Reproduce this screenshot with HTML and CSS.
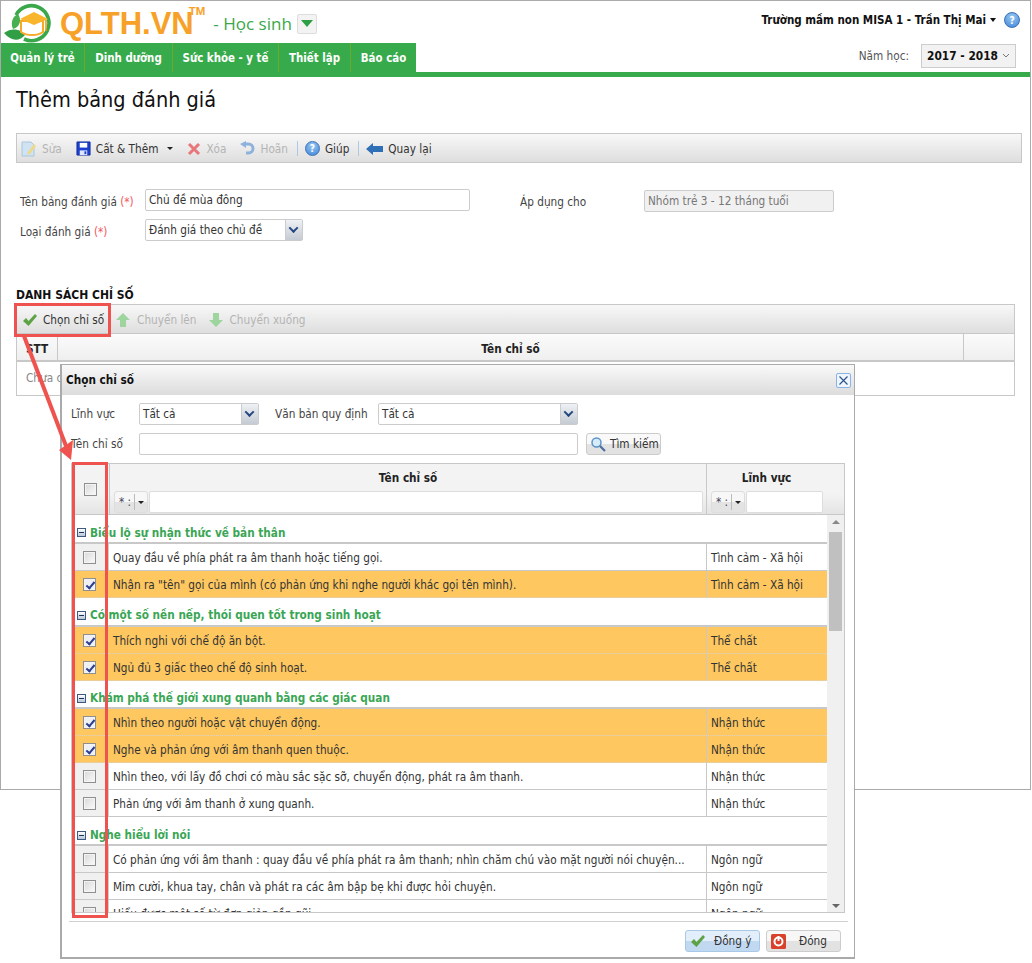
FILE: index.html
```html
<!DOCTYPE html>
<html lang="vi">
<head>
<meta charset="utf-8">
<title>Thêm bảng đánh giá</title>
<link rel="stylesheet" href="styles.css">
</head>
<body>
<div class="canvas">
  <div class="page">
    <header class="top">
      <div class="brand">
        <svg class="logo" viewBox="0 0 52 42" width="52" height="42">
          <path d="M13 13A17.500 17.500 0 1 1 21 37" fill="none" stroke="#3aa84a" stroke-width="3.600"/>
          <path d="M1 31C9 25 18 27 22 33C16 40 8 39 1 31Z" fill="#2f9e44"/>
          <path d="M10 27C7 20 10 14 15 12C19 18 17 25 10 27Z" fill="#47b04f"/>
          <path d="M18 19H40V30C34 34 24 34 18 30Z" fill="#fff" stroke="#f7a928" stroke-width="2"/>
          <path d="M31 10L45 17L31 23L17 17Z" fill="#f9b52c"/>
          <path d="M43 18V29" stroke="#e89a1e" stroke-width="1.600"/>
        </svg>
        <span class="brand-name">QLTH.VN</span><span class="brand-tm">TM</span>
        <span class="brand-role">- Học sinh</span>
        <span class="role-btn"><i class="role-caret"></i></span>
      </div>
      <div class="user">
        <span class="user-name">Trường mầm non MISA 1 - Trần Thị Mai</span>
        <i class="user-caret"></i>
        <span class="help-dot big">?</span>
      </div>
    </header>
    <div class="navbar">
      <nav class="tabs">
        <a class="tab t1">Quản lý trẻ</a>
        <a class="tab t2">Dinh dưỡng</a>
        <a class="tab t3">Sức khỏe - y tế</a>
        <a class="tab t4">Thiết lập</a>
        <a class="tab t5">Báo cáo</a>
      </nav>
      <div class="year">
        <span class="year-label">Năm học:</span>
        <span class="year-btn">2017 - 2018
          <svg width="8" height="5" viewBox="0 0 8 5"><path d="M1 1L4 4L7 1" fill="none" stroke="#777"/></svg>
        </span>
      </div>
    </div>
    <main class="content">
      <h1 class="title">Thêm bảng đánh giá</h1>
      <div class="toolbar main-tb">
        <span class="tb off"><svg width="16" height="18" viewBox="0 0 16 18"><path d="M1 2H10L13 5V16H1Z" fill="#cfe3f3" stroke="#a9c6de"/><path d="M7 12L13 4L15 6L9 14L6 15Z" fill="#ecd98a"/></svg>Sửa</span>
        <span class="tb"><svg width="15" height="15" viewBox="0 0 16 16"><path d="M1 1H15V15H1Z" fill="#1c3fcf" stroke="#14309f"/><rect x="4" y="2" width="8" height="5" fill="#fff"/><rect x="4" y="10" width="8" height="5" fill="#dfe6ff"/><rect x="9" y="11" width="2" height="3" fill="#1c3fcf"/></svg>Cất &amp; Thêm<i class="mini-caret"></i></span>
        <span class="tb off"><svg width="14" height="14" viewBox="0 0 14 14"><path d="M2 2L12 12M12 2L2 12" stroke="#e8777b" stroke-width="3"/></svg>Xóa</span>
        <span class="tb off"><svg width="15" height="16" viewBox="0 0 15 16"><path d="M5 3H8.500A4.500 4.500 0 0 1 8.500 12H6" fill="none" stroke="#8fb2dc" stroke-width="3"/><path d="M0 3L6 0V7Z" fill="#8fb2dc"/></svg>Hoãn</span>
        <i class="tb-sep"></i>
        <span class="tb"><span class="help-dot">?</span>Giúp</span>
        <i class="tb-sep"></i>
        <span class="tb"><svg width="17" height="14" viewBox="0 0 17 14"><path d="M0 7L7 1V4H17V10H7V13Z" fill="#2e6fb5"/></svg>Quay lại</span>
      </div>
      <form class="form">
        <div class="form-col left-col">
          <div class="form-row">
            <label class="lbl">Tên bảng đánh giá <b class="req">(*)</b></label>
            <span class="input name-input">Chủ đề mùa đông</span>
          </div>
          <div class="form-row">
            <label class="lbl">Loại đánh giá <b class="req">(*)</b></label>
            <span class="input select type-sel">Đánh giá theo chủ đề<i class="sel-arrow"></i></span>
          </div>
        </div>
        <div class="apply">
          <label class="apply-lbl">Áp dụng cho</label>
          <span class="input disabled">Nhóm trẻ 3 - 12 tháng tuổi</span>
        </div>
      </form>
      <h2 class="list-title">DANH SÁCH CHỈ SỐ</h2>
      <div class="toolbar list-tb">
        <span class="tb"><svg class="ico-check" width="16" height="14" viewBox="0 0 16 14"><path d="M1 8L4 5L6.500 8L13 1L15 3L6.500 13Z" fill="#5da345"/></svg>Chọn chỉ số</span>
        <span class="tb off wide-gap"><svg width="16" height="16" viewBox="0 0 16 16"><path d="M8 1L15 8H11V15H5V8H1Z" fill="#9ed49d"/></svg>Chuyển lên</span>
        <span class="tb off wide-gap"><svg width="16" height="16" viewBox="0 0 16 16"><path d="M8 15L15 8H11V1H5V8H1Z" fill="#9ed49d"/></svg>Chuyển xuống</span>
      </div>
      <div class="list-table">
        <div class="list-head">
          <span class="lh-stt">STT</span>
          <span class="lh-name">Tên chỉ số</span>
          <span class="lh-end"></span>
        </div>
        <div class="list-empty">Chưa có dữ liệu</div>
      </div>
    </main>
  </div>

  <section class="dialog">
    <div class="dlg-title">
      <span>Chọn chỉ số</span>
      <span class="dlg-close"><svg width="9" height="9" viewBox="0 0 9 9"><path d="M0.500 0.500L8.500 8.500M8.500 0.500L0.500 8.500" stroke="#2a4f8f" stroke-width="1.100"/></svg></span>
    </div>
    <div class="filters">
      <div class="f-row">
        <label class="f-lbl">Lĩnh vực</label>
        <span class="input select f-sel1">Tất cả<i class="sel-arrow"></i></span>
        <label class="f-lbl2">Văn bản quy định</label>
        <span class="input select f-sel2">Tất cả<i class="sel-arrow"></i></span>
      </div>
      <div class="f-row">
        <label class="f-lbl">Tên chỉ số</label>
        <span class="input f-text"></span>
        <span class="search-btn"><svg width="16" height="16" viewBox="0 0 16 16"><circle cx="6.500" cy="6.500" r="4.500" fill="#d7ecfb" stroke="#5c93c7" stroke-width="1.500"/><path d="M10 10L15 15" stroke="#4a6f9c" stroke-width="2.200"/></svg>Tìm kiếm</span>
      </div>
    </div>
    <div class="grid">
      <div class="g-head">
        <div class="gh-check"><i class="cb"></i></div>
        <div class="gh-col gh-name">
          <span class="gh-text">Tên chỉ số</span>
          <div class="gh-filter"><span class="op">* :<i class="op-sep"></i><i class="mini-caret"></i></span><span class="gh-input"></span></div>
        </div>
        <div class="gh-col gh-field">
          <span class="gh-text">Lĩnh vực</span>
          <div class="gh-filter"><span class="op">* :<i class="op-sep"></i><i class="mini-caret"></i></span><span class="gh-input"></span></div>
        </div>
        <div class="gh-end"></div>
      </div>
      <div class="g-body">
        <div class="g-rows">
          <div class="group g1"><i class="minus"></i>Biểu lộ sự nhận thức về bản thân</div>
          <div class="row"><span class="c-check"><i class="cb"></i></span><span class="c-name">Quay đầu về phía phát ra âm thanh hoặc tiếng gọi.</span><span class="c-field">Tình cảm - Xã hội</span></div>
          <div class="row sel"><span class="c-check"><i class="cb on"></i></span><span class="c-name">Nhận ra "tên" gọi của mình (có phản ứng khi nghe người khác gọi tên mình).</span><span class="c-field">Tình cảm - Xã hội</span></div>
          <div class="group g2"><i class="minus"></i>Có một số nền nếp, thói quen tốt trong sinh hoạt</div>
          <div class="row sel"><span class="c-check"><i class="cb on"></i></span><span class="c-name">Thích nghi với chế độ ăn bột.</span><span class="c-field">Thể chất</span></div>
          <div class="row sel"><span class="c-check"><i class="cb on"></i></span><span class="c-name">Ngủ đủ 3 giấc theo chế độ sinh hoạt.</span><span class="c-field">Thể chất</span></div>
          <div class="group g3"><i class="minus"></i>Khám phá thế giới xung quanh bằng các giác quan</div>
          <div class="row sel"><span class="c-check"><i class="cb on"></i></span><span class="c-name">Nhìn theo người hoặc vật chuyển động.</span><span class="c-field">Nhận thức</span></div>
          <div class="row sel"><span class="c-check"><i class="cb on"></i></span><span class="c-name">Nghe và phản ứng với âm thanh quen thuộc.</span><span class="c-field">Nhận thức</span></div>
          <div class="row"><span class="c-check"><i class="cb"></i></span><span class="c-name">Nhìn theo, với lấy đồ chơi có màu sắc sặc sỡ, chuyển động, phát ra âm thanh.</span><span class="c-field">Nhận thức</span></div>
          <div class="row"><span class="c-check"><i class="cb"></i></span><span class="c-name">Phản ứng với âm thanh ở xung quanh.</span><span class="c-field">Nhận thức</span></div>
          <div class="group g4"><i class="minus"></i>Nghe hiểu lời nói</div>
          <div class="row"><span class="c-check"><i class="cb"></i></span><span class="c-name">Có phản ứng với âm thanh : quay đầu về phía phát ra âm thanh; nhìn chăm chú vào mặt người nói chuyện...</span><span class="c-field">Ngôn ngữ</span></div>
          <div class="row"><span class="c-check"><i class="cb"></i></span><span class="c-name">Mỉm cười, khua tay, chân và phát ra các âm bập bẹ khi được hỏi chuyện.</span><span class="c-field">Ngôn ngữ</span></div>
          <div class="row"><span class="c-check"><i class="cb"></i></span><span class="c-name">Hiểu được một số từ đơn giản gần gũi.</span><span class="c-field">Ngôn ngữ</span></div>
        </div>
        <div class="scroll">
          <i class="s-up"></i>
          <i class="s-thumb"></i>
          <i class="s-down"></i>
        </div>
      </div>
    </div>
    <div class="dlg-foot">
      <span class="btn ok"><svg width="16" height="14" viewBox="0 0 16 14"><path d="M1 8L4 5L6.500 8L13 1L15 3L6.500 13Z" fill="#5da345"/></svg>Đồng ý</span>
      <span class="btn close"><svg width="15" height="15" viewBox="0 0 15 15"><rect width="15" height="15" rx="1.500" fill="#d8412a"/><circle cx="7.500" cy="7.500" r="4" fill="none" stroke="#fff" stroke-width="2"/><rect x="6.500" y="2" width="2" height="5" fill="#fff"/></svg>Đóng</span>
    </div>
  </section>

  <i class="mark mark-btn"></i>
  <i class="mark mark-col"></i>
  <svg class="arrow" width="60" height="130" viewBox="0 0 60 130">
    <path d="M6 2L48 112" stroke="#ef5350" stroke-width="4" fill="none"/>
    <path d="M53 126L41 116L55 106Z" fill="#ef5350"/>
  </svg>
</div>
</body>
</html>
```
FILE: styles.css
```css
* { box-sizing: border-box; }
html, body { margin: 0; padding: 0; background: #fff; }
body { font-family: "DejaVu Sans Condensed", "DejaVu Sans", sans-serif; font-stretch: condensed; font-size: 11.700px; color: #222; }
i { display: block; font-style: normal; }
.canvas { position: relative; width: 1032px; height: 963px; overflow: hidden; }
.page { width: 1031px; height: 790px; border: 1px solid #aaa; }

/* header */
.top { height: 42px; display: flex; justify-content: space-between; }
.brand { display: flex; align-items: center; position: relative; padding-left: 2px; }
.logo { flex: none; margin-top: 1px; }
.brand-name { font-family: "Liberation Sans", sans-serif; font-stretch: normal; font-weight: 700; font-size: 31px; color: #f7a128; margin-left: 5px; margin-top: 4px; }
.brand-tm { font-family: "Liberation Sans", sans-serif; font-stretch: normal; font-weight: 700; font-size: 11.500px; color: #f7a128; align-self: flex-start; margin: 4px 0 0 -5px; }
.brand-role { font-family: "Open Sans", sans-serif; font-stretch: normal; font-size: 17px; color: #3aa84a; margin-left: 8px; margin-top: 3px; }
.role-btn { width: 20px; height: 20px; margin-left: 5px; margin-top: 3px; background: #f3f3f3; border: 1px solid #ddd; border-radius: 2px; display: flex; align-items: center; justify-content: center; }
.role-caret { border: 6px solid transparent; border-top: 7px solid #2f9e44; border-bottom: 0; }
.user { display: flex; align-items: center; height: 38px; padding-right: 10px; }
.user-name { font-weight: 700; color: #111; font-size: 11.500px; }
.user-caret { margin: 0 8px 0 4px; border: 3.500px solid transparent; border-top: 4px solid #111; border-bottom: 0; }
.help-dot { display: inline-flex; align-items: center; justify-content: center; flex: none; width: 15px; height: 15px; border-radius: 50%; background: radial-gradient(circle at 50% 30%, #9cc9f3, #3d83d8); border: 1px solid #3b72b8; color: #fff; font-weight: 700; font-size: 10px; }
.help-dot.big { width: 16px; height: 16px; }
.navbar { height: 34px; display: flex; justify-content: space-between; border-bottom: 5px solid #37ab4c; }
.tabs { display: flex; }
.tab { height: 29px; background: #37ab4c; color: #fff; font-weight: 700; font-size: 11.400px; display: flex; align-items: center; justify-content: center; border-right: 1px solid #6aab2e; }
.t1 { width: 84px; } .t2 { width: 88px; } .t3 { width: 106px; } .t4 { width: 72px; } .t5 { width: 65px; border-right: 0; }
.year { display: flex; align-items: center; padding-right: 14px; height: 25px; }
.year-label { color: #555; margin-right: 12px; }
.year-btn { width: 95px; height: 24px; display: flex; align-items: center; justify-content: center; gap: 4px; border: 1px solid #ccc; background: #f2f2f2; font-weight: 700; color: #111; font-size: 11.800px; white-space: nowrap; }

/* content */
.content { padding: 0 8px 0 15px; }
.title { margin: 0; height: 56px; padding-top: 8px; font-size: 21.500px; font-weight: 400; color: #111; line-height: 29px; }
.toolbar { display: flex; align-items: center; border: 1px solid #c8c8c8; background: linear-gradient(#f8f8f8, #dedede); }
.main-tb { height: 30px; width: 1006px; padding: 1px 0 0 4px; }
.tb { display: flex; align-items: center; gap: 5px; color: #333; margin-right: 14px; white-space: nowrap; }
.tb.off { color: #b4b4b4; }
.mini-caret { border: 3px solid transparent; border-top: 3.500px solid #222; border-bottom: 0; margin-left: 4px; }
.tb-sep { width: 1px; height: 15px; background: #a9c9e6; margin: 0 7px 0 -5px; }
.form { display: flex; height: 132px; position: relative; }
.form-col { padding: 22px 0 0 4px; }
.form-row { display: flex; align-items: center; height: 30px; }
.lbl { width: 125px; color: #444; padding-top: 3px; }
.req { color: #f2555e; font-weight: 400; }
.input { display: flex; align-items: center; height: 22px; border: 1px solid #ccc; border-radius: 2px; padding-left: 3px; background: #fff; color: #333; position: relative; white-space: nowrap; }
.name-input { width: 325px; }
.select { padding-right: 18px; }
.type-sel { width: 158px; }
.sel-arrow { position: absolute; right: 0; top: 0; bottom: 0; width: 17px; background: linear-gradient(#eef1f5, #c5cbd3); border-left: 1px solid #ccc; }
.sel-arrow::after { content: ""; position: absolute; left: 4px; top: 6px; width: 5px; height: 5px; border-right: 2px solid #23477f; border-bottom: 2px solid #23477f; transform: rotate(45deg) translate(-1px, -1px); }
.apply { display: flex; align-items: center; height: 22px; margin: 27px 0 0 50px; }
.apply-lbl { width: 124px; color: #444; padding-top: 2px; }
.disabled { width: 190px; background: #f1f1f1; color: #777; }
.list-title { margin: 0; height: 9px; font-size: 12px; font-weight: 700; color: #111; line-height: 0; }
.list-tb { height: 30px; width: 999px; padding: 1px 0 0 5px; }
.list-tb .tb { margin-right: 11px; }
.list-tb .wide-gap { gap: 6px; }
.list-table { width: 999px; border: 1px solid #c8c8c8; border-top: 0; }
.list-head { display: flex; height: 28px; border-bottom: 2px solid #c8c8c8; background: linear-gradient(#fbfbfb, #efefef); font-weight: 700; text-align: center; line-height: 30px; }
.lh-stt { width: 41px; border-right: 1px solid #c8c8c8; }
.lh-name { width: 906px; border-right: 1px solid #c8c8c8; }
.list-empty { height: 33px; padding-left: 9px; line-height: 33px; color: #888; }

/* dialog */
.dialog { position: absolute; left: 60px; top: 364px; width: 795px; height: 595px; border: 1px solid #aaa; border-left-width: 2px; border-bottom-width: 2px; background: #fff; }
.dlg-title { height: 30px; display: flex; align-items: center; justify-content: space-between; padding: 0 3px 0 4px; background: linear-gradient(#f9f9f9, #dcdcdc); font-weight: 700; color: #111; }
.dlg-close { width: 15px; height: 15px; display: flex; align-items: center; justify-content: center; border: 1px solid #87b3e6; background: #eef5fd; border-radius: 2px; }
.filters { padding: 8px 0 0 9px; height: 68px; }
.f-row { display: flex; align-items: center; height: 22px; margin-bottom: 8px; }
.f-lbl { width: 68px; color: #444; }
.f-lbl2 { margin-left: 16px; width: 103px; color: #444; }
.f-sel1 { width: 120px; }
.f-sel2 { width: 200px; }
.f-text { width: 439px; }
.search-btn { margin-left: 8px; width: 75px; height: 22px; display: flex; align-items: center; gap: 4px; padding-left: 3px; border: 1px solid #ccc; border-radius: 3px; background: linear-gradient(#f9f9f9 50%, #e2e2e2 50%); color: #333; white-space: nowrap; }
.grid { margin-left: 9px; width: 774px; height: 450px; border: 1px solid #c8c8c8; overflow: hidden; }
.g-head { display: flex; height: 51px; border-bottom: 1px solid #c8c8c8; background: linear-gradient(#f3f3f3 60%, #e4e4e4); }
.gh-check { width: 37px; display: flex; align-items: center; justify-content: center; padding: 0 1px 0 0; }
.gh-col { display: flex; flex-direction: column; border-left: 1px solid #c8c8c8; padding-left: 4px; }
.gh-name { width: 597px; }
.gh-field { width: 120px; }
.gh-end { flex: 1; }
.gh-text { height: 27px; line-height: 29px; text-align: center; font-weight: 700; color: #222; padding-right: 4px; }
.gh-filter { display: flex; gap: 1px; padding-right: 3px; }
.op { flex: none; width: 34px; height: 22px; display: flex; align-items: center; padding-left: 4px; border: 1px solid #ddd; border-radius: 3px; background: linear-gradient(#f7f7f7 50%, #e3e3e3 50%); color: #445; }
.op-sep { width: 1px; height: 16px; background: #bbb; margin-left: 3px; }
.op .mini-caret { margin-left: 3px; }
.gh-input { flex: 1; height: 22px; border: 1px solid #ddd; border-radius: 2px; background: #fff; }
.g-body { display: flex; height: 398px; overflow: hidden; }
.g-rows { width: 755px; flex: none; }
.group { border-bottom: 2px solid #c8c8c8; padding: 8px 0 0 5px; display: flex; align-items: center; gap: 4px; color: #3aa655; font-weight: 700; }
.g1 { height: 29px; }
.g2 { height: 29px; padding-top: 7px; }
.g3 { height: 28px; }
.g4 { height: 29px; padding-top: 9px; }
.minus { width: 9px; height: 9px; border: 1px solid #3d5a80; background: linear-gradient(#fff, #b6c6da); position: relative; flex: none; }
.minus::after { content: ""; position: absolute; left: 1px; right: 1px; top: 3px; height: 1px; background: #1c3553; }
.row { display: flex; height: 27px; border-bottom: 1px solid #c8c8c8; }
.row.sel { background: #fec760; border-bottom-style: dotted; border-bottom-color: #d5d5d5; }
.c-check { width: 37px; background: #f0f0f0; display: flex; align-items: center; justify-content: center; padding-right: 2px; border-right: 1px solid #d0d0d0; }
.sel .c-check { background: #fec760; border-right: 0; }
.c-name { width: 597px; padding: 1px 0 0 4px; line-height: 26px; color: #333; white-space: nowrap; overflow: hidden; }
.c-field { flex: 1; border-left: 1px solid #c8c8c8; padding: 1px 0 0 4px; line-height: 26px; color: #333; white-space: nowrap; }
.cb { width: 13px; height: 13px; border: 1px solid #8f8f8f; background: linear-gradient(135deg, #d8d8d8, #fbfbfb); position: relative; box-shadow: inset 0 0 0 1px #f4f4f4; }
.cb.on { background: #eef0f5; }
.cb.on::after { content: ""; position: absolute; left: 3.500px; top: 1px; width: 3px; height: 7px; border-right: 2px solid #2b3f8f; border-bottom: 2px solid #2b3f8f; transform: rotate(40deg); }
.scroll { flex: 1; background: #f0f0f0; position: relative; }
.s-thumb { position: absolute; left: 2px; right: 2px; top: 17px; height: 99px; background: #c0c0c0; }
.s-up, .s-down { position: absolute; left: 5px; border: 4px solid transparent; }
.s-up { top: 5px; border-bottom: 4px solid #888; border-top: 0; }
.s-down { bottom: 5px; border-top: 4px solid #666; border-bottom: 0; }
.dlg-foot { margin: 8px 6px 0 7px; border-top: 1px solid #d0d0d0; padding: 8px 7px 0 0; display: flex; justify-content: flex-end; gap: 6px; }
.btn { height: 22px; width: 75px; display: flex; align-items: center; gap: 8px; padding-left: 4px; border: 1px solid #ccc; border-radius: 3px; color: #333; white-space: nowrap; }
.ok { background: linear-gradient(#e2effb 50%, #c1d8f1 50%); border-color: #a8c8e8; }
.close { background: linear-gradient(#f7f7f7 50%, #e2e2e2 50%); gap: 13px; }

/* annotations */
.mark { position: absolute; border: 3px solid #ef5350; }
.mark-btn { left: 14px; top: 303px; width: 97px; height: 34px; }
.mark-col { left: 72px; top: 462px; width: 36px; height: 456px; }
.arrow { position: absolute; left: 18px; top: 334px; }
```
